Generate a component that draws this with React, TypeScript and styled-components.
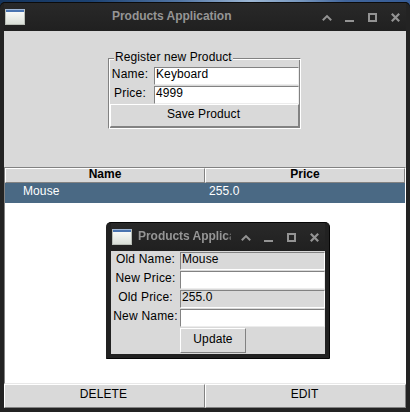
import React from "react";
import styled, { createGlobalStyle } from "styled-components";

const GlobalStyle = createGlobalStyle`
  html, body { margin: 0; padding: 0; overflow: hidden; }
  * { box-sizing: border-box; }
  body { font: 12px/14px "Liberation Sans", Arial, sans-serif; color: #000; }
`;

const Desktop = styled.div`
  position: relative;
  width: 410px;
  height: 412px;
  padding-top: 2px;
  background: linear-gradient(90deg, #15345c 0, #1c4272 90px, #5276a5 180px, #9db7d4 250px, #7898bf 300px, #41659b 345px, #355b94 410px);
`;

const MainWindow = styled.div`
  height: 410px;
  padding: 1px 4px 4px;
  display: flex;
  flex-direction: column;
  background: #232323;
  border-radius: 5px 5px 0 0;
  box-shadow: inset 0 1px #0b0b0b;
`;

const DialogWindow = styled.div`
  position: absolute;
  left: 106px;
  top: 222px;
  width: 224px;
  height: 137px;
  padding: 0 4px 4px 5px;
  display: flex;
  flex-direction: column;
  background: #212121;
  border: solid #050505;
  border-width: 1px 1px 1px 0;
  border-radius: 5px 5px 1px 1px;
`;

const TitleBar = styled.div`
  flex: none;
  height: 28px;
  display: flex;
  align-items: flex-start;
  padding: 6px 0 0 1px;
  background: linear-gradient(#292929, #202020);
`;

const WindowIcon = styled.div`
  flex: none;
  width: 20px;
  height: 16px;
  border: 1px solid #b9beb7;
  border-top-color: #9fb6d5;
  background: linear-gradient(#4a74b0 0 2px, #f8f9f7 2px, #dadfd8);
`;

const Title = styled.div<{ $small?: boolean }>`
  margin-left: ${(p) => (p.$small ? 6 : 87)}px;
  width: ${(p) => (p.$small ? 93 : 190)}px;
  overflow: hidden;
  white-space: nowrap;
  color: #959595;
  font-weight: bold;
  letter-spacing: -0.04px;
  ${(p) => p.$small && "mask-image: linear-gradient(90deg, #000 88px, #0008);"}
`;

const Controls = styled.svg<{ $gap: number }>`
  flex: none;
  display: block;
  width: 82px;
  height: 12px;
  margin: 3px 0 0 ${(p) => p.$gap}px;
`;

const WindowControls = ({ gap }: { gap: number }) => (
  <Controls $gap={gap} viewBox="0 0 82 12" fill="none" stroke="#939393" strokeWidth="2">
    <path d="M1.8 8.3 6 4.1 10.2 8.3" />
    <path d="M24 9H33" />
    <path d="M48 2H55V9H48Z" />
    <path d="M70.8 1.8 78.2 9.2M78.2 1.8 70.8 9.2" strokeWidth="2.2" />
  </Controls>
);

const Content = styled.div`
  flex: 1;
  min-height: 0;
  display: flex;
  flex-direction: column;
  background: #d9d9d9;
`;

const FormArea = styled.div`
  height: 136px;
  padding: 27px 0 0 104px;
`;

const Group = styled.div`
  position: relative;
  width: 193px;
  height: 71px;
  padding: 8px 1px 1px;
  border: 1px solid;
  border-color: #828282 #fff #fff #828282;
  box-shadow: inset 1px 1px #fff, inset -1px -1px #828282;
`;

const Legend = styled.span`
  position: absolute;
  left: 5px;
  top: -9px;
  padding: 0 1px;
  background: #d9d9d9;
  white-space: nowrap;
  letter-spacing: 0.1px;
`;

const Row = styled.div<{ $labelWidth: number; $inset?: number }>`
  display: grid;
  grid-template-columns: ${(p) => p.$labelWidth}px 1fr;
  height: 19px;

  > label {
    padding-right: ${(p) => p.$inset ?? 0}px;
  }
`;

const Label = styled.label`
  text-align: center;
  white-space: nowrap;
  letter-spacing: 0.2px;
`;

const Entry = styled.div<{ $readOnly?: boolean }>`
  height: 18px;
  padding: 0 1px;
  line-height: 12px;
  letter-spacing: 0.1px;
  border: 1px solid;
  border-color: #828282 ${(p) => (p.$readOnly ? "#fff #fff" : "#ececec #ececec")} #828282;
  background: ${(p) => (p.$readOnly ? "#d9d9d9" : "#fff")};
`;

const Button = styled.div`
  flex: 1;
  height: 24px;
  padding: 2px 2px 0 0;
  text-align: center;
  letter-spacing: 0.1px;
  background: #d9d9d9;
  border: 1px solid;
  border-color: #fff #828282 #828282 #fff;
`;

const SaveButton = styled(Button)`
  height: 23px;
  margin-top: -1px;
`;

const UpdateButton = styled(Button)`
  height: 25px;
  padding: 3px 0 0;
`;

const Table = styled.div`
  height: 217px;
  background: #fff;
  border: 1px solid;
  border-color: #828282 #fff #e8e8e8 #828282;
`;

const Columns = styled.div`
  display: grid;
  grid-template-columns: 200px 200px;
`;

const HeaderCell = styled.div`
  height: 15px;
  line-height: 10px;
  text-align: center;
  font-weight: bold;
  background: #d9d9d9;
  border: 1px solid;
  border-color: #fff #828282 #828282 #fff;
`;

const SelectedRow = styled(Columns)`
  height: 20px;
  background: #4a6984;
  color: #fff;
`;

const Cell = styled.div<{ $indent: number }>`
  padding: 1px 0 0 ${(p) => p.$indent}px;
  letter-spacing: 0.1px;
`;

const Actions = styled.div`
  display: flex;
  height: 24px;
`;

const UpdateSlot = styled.div`
  display: flex;
  width: 66px;
  margin-left: 69px;
`;

const DialogContent = styled(Content)`
  padding-top: 1px;
`;

const dialogRows = [
  { label: "Old Name:", value: "Mouse", readOnly: true },
  { label: "New Price:", value: "", readOnly: false },
  { label: "Old Price:", value: "255.0", readOnly: true },
  { label: "New Name:", value: "", readOnly: false },
];

export default function App() {
  return (
    <Desktop>
      <GlobalStyle />
      <MainWindow>
        <TitleBar>
          <WindowIcon />
          <Title>Products Application</Title>
          <WindowControls gap={19} />
        </TitleBar>
        <Content>
          <FormArea>
            <Group>
              <Legend>Register new Product</Legend>
              <Row $labelWidth={44} $inset={4}>
                <Label>Name:</Label>
                <Entry>Keyboard</Entry>
              </Row>
              <Row $labelWidth={44} $inset={4}>
                <Label>Price:</Label>
                <Entry>4999</Entry>
              </Row>
              <SaveButton>Save Product</SaveButton>
            </Group>
          </FormArea>
          <Table>
            <Columns>
              <HeaderCell>Name</HeaderCell>
              <HeaderCell>Price</HeaderCell>
            </Columns>
            <SelectedRow>
              <Cell $indent={18}>Mouse</Cell>
              <Cell $indent={4}>255.0</Cell>
            </SelectedRow>
          </Table>
          <Actions>
            <Button>DELETE</Button>
            <Button>EDIT</Button>
          </Actions>
        </Content>
      </MainWindow>
      <DialogWindow>
        <TitleBar>
          <WindowIcon />
          <Title $small>Products Application</Title>
          <WindowControls gap={9} />
        </TitleBar>
        <DialogContent>
          {dialogRows.map((r) => (
            <Row key={r.label} $labelWidth={69}>
              <Label>{r.label}</Label>
              <Entry $readOnly={r.readOnly}>{r.value}</Entry>
            </Row>
          ))}
          <UpdateSlot>
            <UpdateButton>Update</UpdateButton>
          </UpdateSlot>
        </DialogContent>
      </DialogWindow>
    </Desktop>
  );
}
